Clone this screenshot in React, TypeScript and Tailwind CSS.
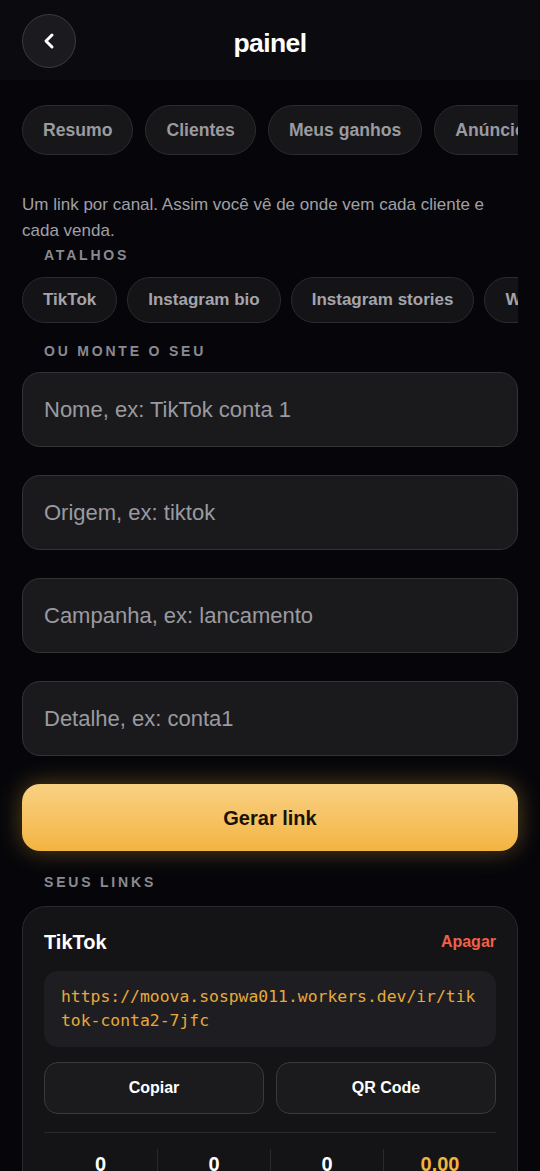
import { ChevronLeft } from "lucide-react";

const tabs = ["Resumo", "Clientes", "Meus ganhos", "Anúncios"];
const atalhos = ["TikTok", "Instagram bio", "Instagram stories", "WhatsApp"];
const campos = [
  "Nome, ex: TikTok conta 1",
  "Origem, ex: tiktok",
  "Campanha, ex: lancamento",
  "Detalhe, ex: conta1",
];
const stats = [
  { valor: "0", cor: "text-white" },
  { valor: "0", cor: "text-white" },
  { valor: "0", cor: "text-white" },
  { valor: "0.00", cor: "text-[#f2b441]" },
];

const App = () => {
  return (
    <div className="min-h-screen bg-[#06060a] text-white font-['Liberation_Sans',Arial,sans-serif] overflow-hidden">
      {/* Header */}
      <header className="h-[80px] bg-[#0b0b0f] flex items-center px-[22px] relative">
        <button className="mt-[2px] w-[54px] h-[54px] rounded-full bg-[#1b1b1f] border border-[#3a3a3f] flex items-center justify-center">
          <ChevronLeft className="w-6 h-6 text-white" strokeWidth={3} />
        </button>
        <h1 className="absolute left-1/2 top-[27px] -translate-x-1/2 text-[26.5px] leading-[32px] font-bold tracking-[-0.6px]">painel</h1>
      </header>

      <main className="px-[22px]">
        {/* Tabs */}
        <div className="mt-[25px] flex gap-3 overflow-hidden">
          {tabs.map((t) => (
            <button
              key={t}
              className="shrink-0 h-[50px] px-5 rounded-full bg-[#17171a] border border-[#2c2c30] text-[17.6px] font-bold text-[#9a9aa0]"
            >
              {t}
            </button>
          ))}
        </div>

        <p className="mt-[37px] text-[17px] leading-[26px] text-[#a0a0a6]">
          Um link por canal. Assim você vê de onde vem cada cliente e cada venda.
        </p>

        <div className="ml-[22px] mt-[1px] text-[14px] leading-[20px] font-bold tracking-[0.2em] text-[#8a8a90]">ATALHOS</div>
        <div className="mt-3 flex gap-[10px] overflow-hidden">
          {atalhos.map((a) => (
            <button
              key={a}
              className="shrink-0 h-[46px] px-5 rounded-full bg-[#141417] border border-[#2c2c30] text-[17px] font-bold text-[#a4a4aa]"
            >
              {a}
            </button>
          ))}
        </div>

        <div className="mt-[18px] ml-[22px] text-[14px] leading-[20px] font-bold tracking-[0.2em] text-[#8a8a90]">OU MONTE O SEU</div>
        <div className="mt-[11px] flex flex-col gap-[28px]">
          {campos.map((c) => (
            <input
              key={c}
              placeholder={c}
              className="h-[75px] w-full rounded-[18px] bg-[#1a1a1d] border border-[#333337] px-[21px] text-[22px] text-white placeholder:text-[#9a9aa0] outline-none"
            />
          ))}
        </div>

        <button className="mt-[28px] w-full h-[67px] rounded-[18px] bg-gradient-to-b from-[#f9d182] to-[#f3b43f] text-[#1a1206] text-[20px] font-bold shadow-[0_0_24px_rgba(243,180,63,0.35)]">
          Gerar link
        </button>

        <div className="mt-[21px] ml-[22px] text-[14px] leading-[20px] font-bold tracking-[0.2em] text-[#8a8a90]">SEUS LINKS</div>

        {/* Card */}
        <div className="mt-[14px] rounded-[24px] bg-[#141417] border border-[#2a2a2e] px-[21px] pt-[22px] pb-6">
          <div className="flex items-center justify-between h-[26px]">
            <span className="text-[20px] font-bold">TikTok</span>
            <span className="text-[16px] font-bold text-[#f0604a]">Apagar</span>
          </div>
          <div className="mt-[16px] rounded-[14px] bg-[#1e1e22] px-[17px] py-[14px] font-['DejaVu_Sans_Mono',monospace] text-[16.4px] leading-[24px] text-[#e8a93a] break-all">
            https://moova.sospwa011.workers.dev/ir/tiktok-conta2-7jfc
          </div>
          <div className="mt-[15px] grid grid-cols-2 gap-3">
            <button className="h-[52px] rounded-[14px] bg-[#1b1b1e] border border-[#3a3a3e] text-[16px] font-bold">Copiar</button>
            <button className="h-[52px] rounded-[14px] bg-[#1b1b1e] border border-[#3a3a3e] text-[16px] font-bold">QR Code</button>
          </div>
          <div className="mt-[18px] border-t border-[#2a2a2e] pt-4 grid grid-cols-4">
            {stats.map((s, i) => (
              <div key={i} className={`flex flex-col items-center ${i > 0 ? "border-l border-[#2a2a2e]" : ""}`}>
                <span className={`text-[20px] font-bold leading-[30px] ${s.cor}`}>{s.valor}</span>
                <span className="text-[12px] text-[#8a8a90] mt-1">cliques</span>
              </div>
            ))}
          </div>
        </div>
      </main>
    </div>
  );
};

export default App;
